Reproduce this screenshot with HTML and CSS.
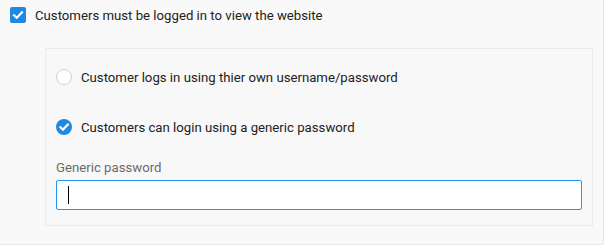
FILE: index.html
```html
<!DOCTYPE html>
<html>
<head>
<meta charset="utf-8">
<link rel="stylesheet" href="styles.css">
</head>
<body>
<div class="panel">
  <label class="check-row">
    <span class="checkbox">
      <svg width="16" height="16" viewBox="0 0 16 16"><path d="M4 8.2 L6.8 10.8 L12 5.4" fill="none" stroke="#fff" stroke-width="2.2" stroke-linecap="square"/></svg>
    </span>
    <span class="check-label">Customers must be logged in to view the website</span>
  </label>
  <div class="options">
    <label class="radio-row">
      <span class="radio"></span>
      <span class="radio-label">Customer logs in using thier own username/password</span>
    </label>
    <label class="radio-row second">
      <span class="radio checked">
        <svg width="16" height="16" viewBox="0 0 16 16"><path d="M4.4 8.2 L7 10.6 L11.8 5.6" fill="none" stroke="#fff" stroke-width="2.2" stroke-linecap="square"/></svg>
      </span>
      <span class="radio-label">Customers can login using a generic password</span>
    </label>
    <div class="field">
      <div class="field-label">Generic password</div>
      <div class="input"><span class="caret"></span></div>
    </div>
  </div>
</div>
</body>
</html>
```

FILE: styles.css
```css
html, body {
  margin: 0;
  padding: 0;
  background: #f9f9f9;
  font-family: Roboto, "Liberation Sans", sans-serif;
  font-size: 13.2px;
  color: #222;
}
.panel {
  box-sizing: border-box;
  width: 604px;
  height: 245px;
  border-right: 1px solid #e8e8e8;
  border-bottom: 1px solid #e8e8e8;
  padding-top: 7px;
}
.check-row {
  display: flex;
  align-items: center;
  gap: 9px;
  padding-left: 10px;
  height: 16px;
}
.checkbox {
  width: 16px;
  height: 16px;
  border-radius: 2px;
  background: #1e88e5;
  display: flex;
}
.options {
  box-sizing: border-box;
  margin-left: 45px;
  margin-top: 25px;
  width: 548px;
  height: 178px;
  border: 1px solid #ebebeb;
  background: #f8f8f8;
  padding: 20px 10px 0 10px;
}
.radio-row {
  display: flex;
  align-items: center;
  gap: 9px;
  height: 16px;
}
.radio-row.second {
  margin-top: 34px;
}
.radio {
  box-sizing: border-box;
  width: 16px;
  height: 16px;
  border-radius: 50%;
  border: 1px solid #d0d0d0;
  background: #fff;
  display: flex;
}
.radio.checked {
  border: none;
  background: #1e88e5;
}
.field {
  margin-top: 25px;
}
.field-label {
  color: #6b6b6b;
  line-height: 16px;
  margin-bottom: 4px;
}
.input {
  box-sizing: border-box;
  height: 30px;
  background: #fff;
  border: 1px solid #2196f3;
  border-radius: 2px;
  display: flex;
  align-items: center;
  padding-left: 11px;
}
.caret {
  width: 1px;
  height: 18px;
  background: #000;
}
```
